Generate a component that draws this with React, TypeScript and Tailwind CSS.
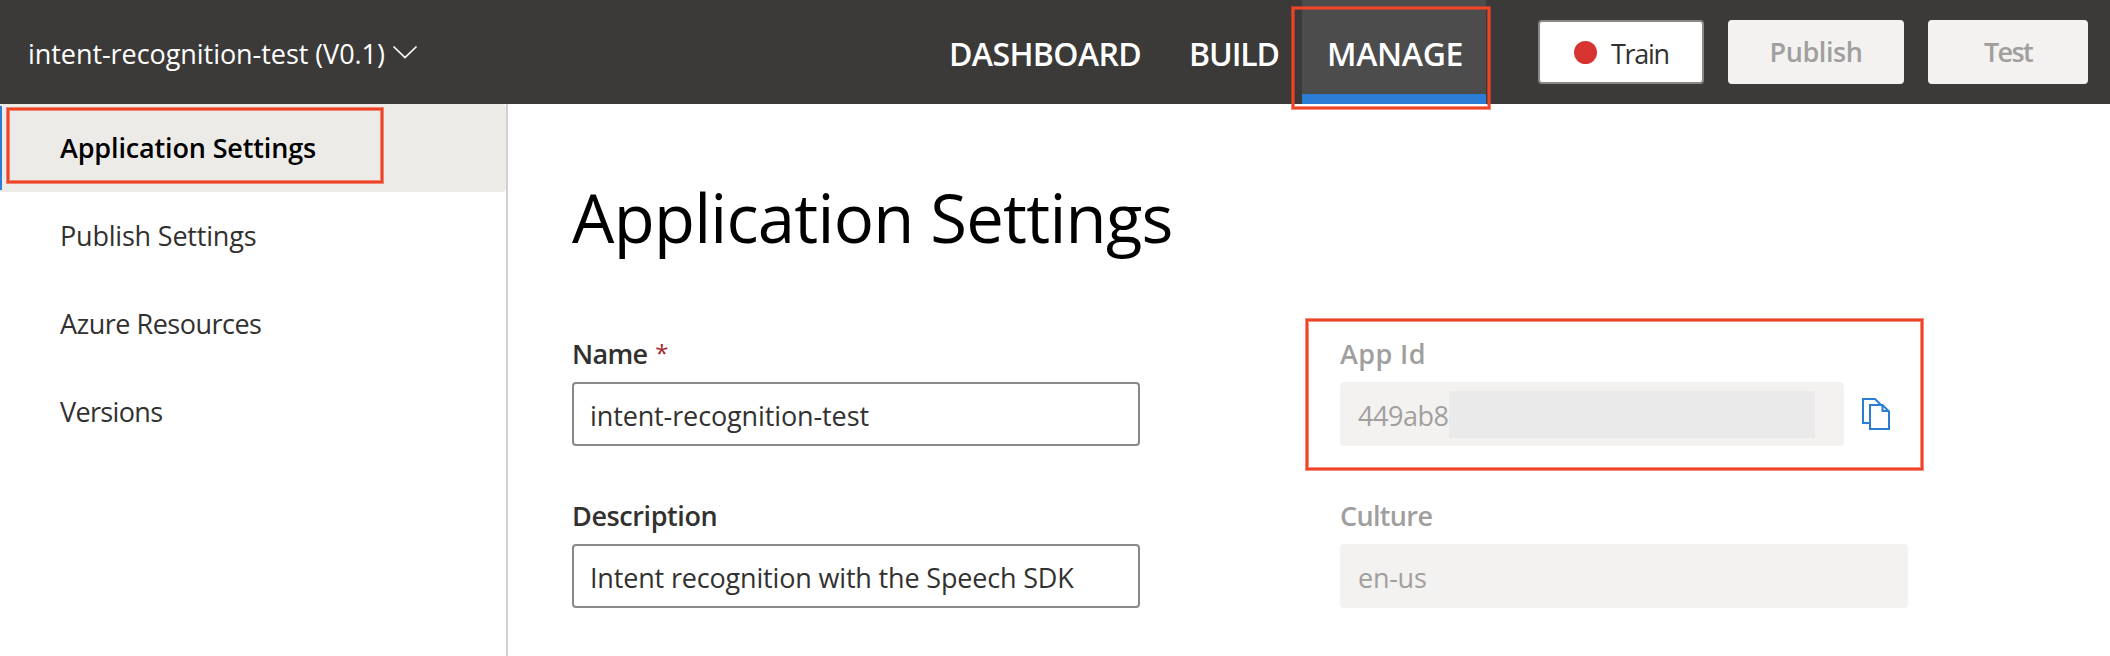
import React from "react";

const SIDEBAR = [
  { label: "Publish Settings", tracking: "tracking-[-0.2px]" },
  { label: "Azure Resources", tracking: "tracking-[-0.5px]" },
  { label: "Versions", tracking: "tracking-[-0.65px]" },
];

function Highlight({ className }: { className: string }) {
  return (
    <div
      className={`pointer-events-none absolute border-2 border-[#f04326] shadow-[0_0_0_1px_rgba(240,67,38,0.6),inset_0_0_0_1px_rgba(240,67,38,0.6)] ${className}`}
    />
  );
}

function Chevron() {
  return (
    <svg className="mt-[-4px] ml-[7px] h-[14px] w-[26px] shrink-0" viewBox="0 0 26 14" fill="none">
      <path d="M1.5 1.5 L13 12.5 L24.5 1.5" stroke="#fff" strokeWidth="1.7" />
    </svg>
  );
}

function CopyIcon() {
  return (
    <svg className="h-[32px] w-[29px]" viewBox="0 0 29 32" fill="none" stroke="#2b7cd3" strokeWidth="2">
      <path d="M9 25 H2 V1 H14 L20 7" />
      <path d="M9 7 H21.5 L28 13.5 V31 H9 Z" />
      <path d="M21.5 7 V13 H28" />
    </svg>
  );
}

export default function App() {
  return (
    <div className="relative flex h-[656px] w-[2110px] flex-col overflow-hidden bg-white font-['Open_Sans',sans-serif] text-[27px] leading-[30px] text-[#323130]">
      <header className="flex h-[104px] shrink-0 bg-[#3b3a38] text-white">
        <div className="flex w-[949px] shrink-0 items-center pt-[3px] pl-[28px]">
          <span className="tracking-[-0.06px]">intent-recognition-test (V0.1)</span>
          <Chevron />
        </div>
        <nav className="flex h-full shrink-0 text-[32px] font-semibold">
          <div className="flex w-[240px] items-center pt-[3px] tracking-[-0.6px]">DASHBOARD</div>
          <div className="flex w-[113px] items-center pt-[3px] tracking-[-1.1px]">BUILD</div>
          <div className="flex w-[184px] items-center border-b-[10px] border-[#2b7cd3] bg-[#4c4c4c] pt-[13px] pl-[25px] tracking-[-0.3px]">
            MANAGE
          </div>
        </nav>
        <div className="flex items-center gap-6 pl-[52px]">
          <button className="flex h-[64px] w-[166px] items-center rounded-[4px] border-2 border-[#8a8886] bg-white pl-[34px] text-[#323130]">
            <span className="h-[23px] w-[23px] rounded-full bg-[#d63331]" />
            <span className="ml-[14px] pt-[3px] tracking-[-1.3px]">Train</span>
          </button>
          <button className="flex h-[64px] w-[176px] items-center justify-center rounded-[4px] bg-[#f3f2f1] font-semibold tracking-[-0.4px] text-[#a19f9d]">
            Publish
          </button>
          <button className="flex h-[64px] w-[160px] items-center justify-center rounded-[4px] bg-[#f3f2f1] font-semibold tracking-[-1.6px] text-[#a19f9d]">
            Test
          </button>
        </div>
      </header>

      <div className="flex flex-1">
        <aside className="w-[508px] shrink-0 border-r-2 border-[#d2d0ce]">
          <div className="flex h-[88px] items-center rounded-r-[4px] bg-[#ecebe8] font-semibold text-black">
            <span className="h-[84px] w-[2px] bg-[#2b7cd3]" />
            <span className="ml-[58px] tracking-[-0.15px]">Application Settings</span>
          </div>
          {SIDEBAR.map((s) => (
            <div key={s.label} className={`flex h-[88px] items-center pl-[60px] ${s.tracking}`}>
              {s.label}
            </div>
          ))}
        </aside>

        <main className="flex flex-col pl-[64px]">
          <h1 className="mt-[73px] h-[79px] text-[67px] leading-[80px] tracking-[-0.74px] text-black">
            Application Settings
          </h1>
          <div className="mt-[83px] flex">
            <section className="flex w-[568px] flex-col">
              <label className="flex h-[30px] font-semibold tracking-[-0.7px]">
                Name
                <span className="ml-[8px] text-[24px] leading-[28px] font-medium text-[#a4262c]">*</span>
              </label>
              <div className="mt-[13px] flex h-[64px] items-center rounded-[4px] border-2 border-[#8a8886] pt-[3px] pl-[16px] tracking-[-0.12px]">
                intent-recognition-test
              </div>
              <label className="mt-[55px] h-[30px] font-semibold tracking-[-0.4px]">Description</label>
              <div className="mt-[13px] flex h-[64px] items-center rounded-[4px] border-2 border-[#8a8886] pt-[3px] pl-[16px] tracking-[-0.17px]">
                Intent recognition with the Speech SDK
              </div>
            </section>

            <section className="ml-[200px] flex w-[568px] flex-col text-[#a19f9d]">
              <label className="h-[30px] font-semibold tracking-[0.4px]">App Id</label>
              <div className="mt-[13px] flex h-[64px] items-center">
                <div className="flex h-full w-[504px] items-center rounded-[4px] bg-[#f3f2f1] pl-[18px]">
                  <span className="w-[91px] pt-[3px] tracking-[-0.45px]">449ab8</span>
                  <span className="h-[47px] w-[366px] bg-[#eaeaea]" />
                </div>
                <div className="ml-[17px]">
                  <CopyIcon />
                </div>
              </div>
              <label className="mt-[55px] h-[30px] font-semibold tracking-[-0.65px]">Culture</label>
              <div className="mt-[13px] flex h-[64px] items-center rounded-[4px] bg-[#f3f2f1] pt-[3px] pl-[18px] tracking-[-0.27px]">
                en-us
              </div>
            </section>
          </div>
        </main>
      </div>

      <Highlight className="top-[7px] left-[1292px] h-[102px] w-[198px]" />
      <Highlight className="top-[108px] left-[7px] h-[75px] w-[376px]" />
      <Highlight className="top-[319px] left-[1306px] h-[151px] w-[617px]" />
    </div>
  );
}
